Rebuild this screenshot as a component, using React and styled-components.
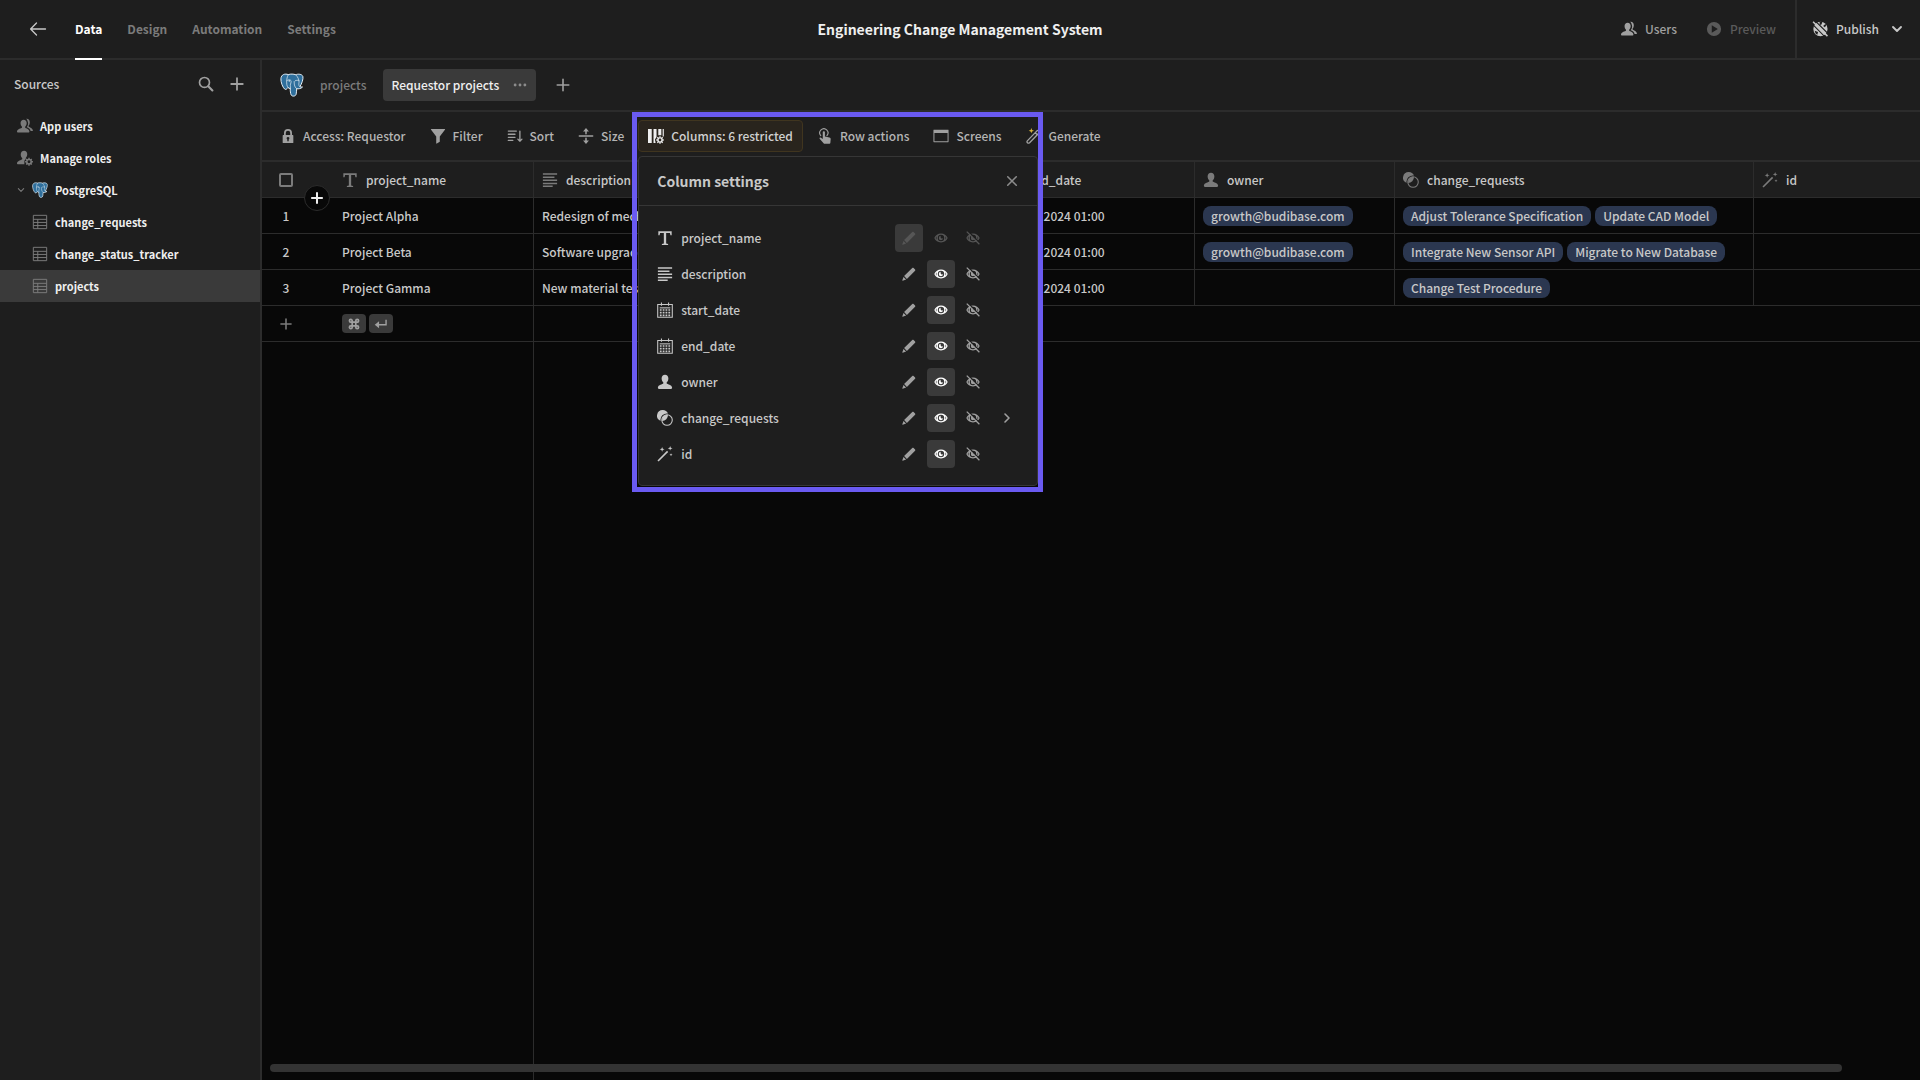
import React from "react";
import styled, { createGlobalStyle, css } from "styled-components";

const c = {
  panel: "#1e1e1e",
  grid: "#080808",
  line: "#2c2c2c",
  raised: "#3a3a3a",
  text: "#c8c8c8",
  bright: "#efefef",
  muted: "#7b7b7b",
  icon: "#a0a0a0",
  pill: "#2b3750",
  accent: "#6a5af1",
};

const Global = createGlobalStyle`
  *, *::before, *::after { box-sizing: border-box; }
  body {
    margin: 0;
    background: ${c.grid};
    color: ${c.text};
    font-family: "Noto Sans CJK SC", "Noto Sans", sans-serif;
    font-size: 12px;
    font-weight: 500;
    line-height: 20px;
  }
  button, input { font: inherit; color: inherit; margin: 0; }
`;

/* ---------- icons ---------- */

const Svg = styled.svg`
  display: block;
  flex: none;
  width: ${(p) => p.$size || 16}px;
  height: ${(p) => p.$size || 16}px;
  fill: currentColor;
`;
const Icon = ({ size, children }) => (
  <Svg $size={size} viewBox="0 0 18 18" aria-hidden="true">{children}</Svg>
);
const line = (w) => ({ fill: "none", stroke: "currentColor", strokeWidth: w, strokeLinecap: "round", strokeLinejoin: "round" });

const BackIcon = () => <Icon size={18}><path {...line(1.3)} d="M16.5 9H1.800M7.500 3L1.600 9l5.900 6" /></Icon>;
const SearchIcon = () => <Icon><circle cx="7.3" cy="7.3" r="5.600" {...line(1.900)} /><path {...line(2.400)} d="M11.800 11.800l4.400 4.400" /></Icon>;
const PlusIcon = ({ size, w = 2 }) => <Icon size={size}><path {...line(w)} d="M9 2.500v13M2.500 9h13" /></Icon>;
const CloseIcon = () => <Icon size={14}><path {...line(2)} d="M3.500 3.500l11 11M14.500 3.500l-11 11" /></Icon>;
const ChevronDown = ({ size, w = 2.4 }) => <Icon size={size}><path {...line(w)} d="M3 6l6 6 6-6" /></Icon>;
const ChevronRight = ({ size }) => <Icon size={size}><path {...line(2.400)} d="M6 3l6 6-6 6" /></Icon>;
const UserIcon = () => (
  <Icon><path d="M9 .8c2.300 0 3.800 1.700 3.800 4.200 0 1.700-.7 3.300-1.700 4.200-.4.400-.4 1.500.2 1.800 2.200 1 5.700 1.600 5.700 4.600 0 .8-.4 1.200-1.100 1.200H2.100c-.7 0-1.100-.4-1.100-1.200 0-3 3.500-3.600 5.700-4.600.6-.3.600-1.400.2-1.800-1-.9-1.700-2.500-1.700-4.200C5.200 2.500 6.700.8 9 .8z" /></Icon>
);
const UsersIcon = () => (
  <Icon>
    <path d="M7.500 2c2.100 0 3.400 1.500 3.400 3.700 0 1.600-.6 3-1.500 3.900-.4.400-.3 1.300.2 1.600 1.900.8 4.400 1.500 4.400 4.300 0 .600-.3.900-.8.900H.9c-.5 0-.9-.3-.9-.9 0-2.800 3.300-3.500 5.200-4.300.5-.3.600-1.200.2-1.600-.9-.9-1.400-2.300-1.400-3.900C4 3.500 5.400 2 7.500 2z" />
    <path d="M10.300.8c2.500-.4 4.100 1.300 4.100 3.900 0 1.700-.5 2.800-1.300 3.700-.3.400-.2 1.100.3 1.400 1.900.9 4.300 1.900 4.600 4.800h-2.700c-.5-2.300-2.400-3.300-4.300-4.100-.1-.3 0-.5.200-.7 1-1.100 1.400-2.600 1.300-4.300C12.100 3.500 11.500 1.900 10.300.8z" />
  </Icon>
);
const RolesIcon = () => (
  <Icon>
    <path d="M8 .8c2.200 0 3.500 1.500 3.500 3.900 0 1.600-.6 3-1.500 3.900-.3.400-.3 1 .1 1.300L8.300 12v4H.8c-.5 0-.8-.3-.8-.8 0-2.800 3.400-3.500 5.500-4.500.5-.3.600-1.300.200-1.700-1-.9-1.500-2.400-1.500-4C4.200 2.400 5.700.8 8 .8z" />
    <circle cx="13.500" cy="13.200" r="2.500" fill="none" stroke="currentColor" strokeWidth="1.700" />
    <path fill="none" stroke="currentColor" strokeWidth="1.600" d="M13.500 8.800v1.700M13.500 15.900v1.700M9.100 13.200h1.700M16.200 13.200h1.700M10.400 10.100l1.200 1.200M15.400 15.100l1.200 1.200M16.600 10.100l-1.200 1.200M11.600 15.100l-1.200 1.200" />
  </Icon>
);
const TableIcon = () => <Icon><path fill="none" stroke="currentColor" strokeWidth="1.100" d="M1.500 1.500h15v15h-15zM1.500 6h15M1.500 9.500h15M1.500 13h15M6.500 6v10.500" /></Icon>;
const LockIcon = () => <Icon><path fillRule="evenodd" d="M4.500 8V5.500a4.500 4.500 0 0 1 9 0V8h.9c.4 0 .6.2.6.6v7.800c0 .4-.2.6-.6.600H3.600c-.4 0-.6-.2-.6-.6V8.600c0-.4.2-.6.600-.6zm2 0h5V5.500a2.500 2.500 0 0 0-5 0zM9 10a1.500 1.500 0 0 0-.8 2.800V15h1.600v-2.200A1.500 1.500 0 0 0 9 10z" /></Icon>;
const FilterIcon = () => <Icon><path d="M1.700 1h14.600c.6 0 .9.600.500 1.100L11 9.500v6l-3.300 2c-.3.200-.7 0-.7-.4V9.500L1.200 2.100C.8 1.600 1.100 1 1.700 1z" /></Icon>;
const SortIcon = () => <Icon><path {...line(1.500)} d="M1.500 3.500h9M1.500 7h7.500M1.500 10.500h7.500M1.500 14h5M14.500 3.500v11M12.200 12.500l2.300 2.300 2.300-2.300" /></Icon>;
const SizeIcon = () => <Icon><path {...line(1.700)} d="M1.500 9h15M9 3v3.500M9 11.500V15" /><path d="M9 0l3.300 4H5.700zM9 18l-3.300-4h6.600z" /></Icon>;
const ColumnsIcon = () => (
  <Icon>
    <path d="M0 1h4.200v16H0zM6.200 1h3.400v9.200L7.800 13l.8 4H6.200zM11.600 1H15v7.200h-3.400zM16.500 1h1.300v8.500h-1.300z" />
    <circle cx="13.500" cy="13.500" r="2.300" fill="none" stroke="currentColor" strokeWidth="1.500" />
    <path fill="none" stroke="currentColor" strokeWidth="1.500" d="M13.500 9.300v1.800M13.500 15.900v1.800M9.300 13.500h1.800M15.900 13.500h1.800M10.500 10.500l1.200 1.200M15.300 15.300l1.200 1.200M16.500 10.500l-1.200 1.200M11.700 15.300l-1.200 1.200" />
  </Icon>
);
const TapIcon = () => (
  <Icon>
    <path d="M6.500 4.800c0-1.500 2.400-1.500 2.400 0v4.700l5 1.100c1 .2 1.500.8 1.500 1.800l-.4 4.500c-.1.600-.4.900-1 .9H8.600c-.5 0-.9-.2-1.200-.6L3 12.200c-.7-1 .5-2 1.500-1.300l2 1.500z" />
    <path {...line(1.300)} d="M4.200 8.500a4.600 4.600 0 1 1 7 0" />
  </Icon>
);
const ScreenIcon = () => <Icon><path fillRule="evenodd" d="M1 2h16c.3 0 .5.200.5.500v13c0 .3-.2.500-.5.500H1c-.3 0-.5-.2-.5-.5v-13c0-.3.2-.5.500-.5zm.6 3.500v9.300h14.800V5.500z" /></Icon>;
const GenerateIcon = () => (
  <Icon>
    <path fill="none" stroke="currentColor" strokeWidth="1.500" strokeLinejoin="round" d="M1.500 14.500L12.300 3.200c1.300-1.300 3.700 1 2.400 2.400L4 16.500c-1.700 1.400-3.800-.5-2.500-2z M10.500 5.300l2.200 2.200" />
    <path fill="#d9b43a" d="M6 0l.8 2.200L9 3l-2.200.8L6 6l-.8-2.200L3 3l2.200-.8z" />
    <circle cx="15.800" cy="11" r="1" fill="#d9b43a" />
  </Icon>
);
const TextIcon = () => <Icon><path d="M1.500 1.500h15v4.300h-1.400l-.5-2.300h-4.300v11.700l2.200.5v1.300h-7v-1.300l2.200-.5V3.500H3.400l-.5 2.300H1.500z" /></Icon>;
const LongTextIcon = () => <Icon><path d="M1 1.500h16v1.700H1zM1 5h13v1.700H1zM1 8.500h16v1.700H1zM1 12h16v1.700H1zM1 15.300h11V17H1z" /></Icon>;
const CalendarIcon = () => (
  <Icon>
    <path fill="none" stroke="currentColor" strokeWidth="1.200" d="M.8 2.800h16.400v14.400H.8zM5 .5v3.800M13 .5v3.800" />
    <path d="M3 6h12v1.200H3z" />
    <path fill="none" stroke="currentColor" strokeWidth="1.900" strokeDasharray="2 1.200" d="M3.200 9h12.200M3.200 12h12.200M3.200 15h12.200" />
  </Icon>
);
const LinkIcon = () => (
  <Icon>
    <path d="M6.500 0a6.500 6.500 0 0 1 5.900 3.900A7.400 7.400 0 0 0 4 12.500 6.500 6.500 0 0 1 6.500 0z" />
    <path d="M5.700 12.300a5.600 5.600 0 0 1 6.600-6.700 6.500 6.500 0 0 1-6.600 6.700z" />
    <circle cx="11.300" cy="11.300" r="5.900" fill="none" stroke="currentColor" strokeWidth="1.200" />
  </Icon>
);
const WandIcon = () => (
  <Icon>
    <path d="M.5 16.300L11.300 5.400l1.300 1.300L1.800 17.500zM5.800 1l.7 2 2 .7-2 .8-.7 2-.8-2-2-.8 2-.7zM14.800 0l.7 1.900 2 .7-2 .700-.7 1.900-.7-1.900-2-.7 2-.7zM15.800 8.200l.4 1.200 1.300.5-1.300.4-.4 1.300-.5-1.300-1.200-.4 1.200-.5z" />
  </Icon>
);
const PencilIcon = () => <Icon size={14}><path d="M13.200 1.200c.5-.5 1.200-.5 1.700 0l1.900 1.900c.5.500.5 1.200 0 1.700L6.300 15.300 2.700 11.700zM1.900 12.700l3.400 3.400-4.400 1.500c-.3.100-.6-.2-.5-.5z" /></Icon>;
const EyeShape = () => (
  <>
    <path fillRule="evenodd" d="M9 3.300c4 0 7 2.700 8.300 5.100.2.400.2.800 0 1.200C16 12 13 14.700 9 14.700S2 12 .7 9.600c-.2-.4-.2-.8 0-1.200C2 6 5 3.300 9 3.300zM9 4.900A4.100 4.100 0 1 0 9 13.100 4.100 4.100 0 0 0 9 4.900zM3.600 6.700C2.900 7.500 2.400 8.300 2.100 9c.3.700.8 1.500 1.500 2.300a6 6 0 0 1 0-4.600zm10.800 0a6 6 0 0 1 0 4.600c.7-.8 1.200-1.600 1.500-2.300-.3-.7-.8-1.500-1.500-2.300z" />
    <path d="M9 6.200a2.800 2.800 0 1 0 2.800 2.900A1.500 1.500 0 1 1 9 6.200z" />
  </>
);
const EyeIcon = () => <Icon size={14}><EyeShape /></Icon>;
const EyeOffIcon = () => (
  <Icon size={14}>
    <EyeShape />
    <path d="M2.500 0L18 15.500" stroke={c.panel} strokeWidth="1.600" />
    <path d="M1 .8L17.200 17" stroke="currentColor" strokeWidth="1.600" />
  </Icon>
);
const PlayIcon = () => <Icon><path fillRule="evenodd" d="M9 1a8 8 0 1 1 0 16A8 8 0 0 1 9 1zM6.500 4.800v8.400L13.300 9z" /></Icon>;
const GlobeOffIcon = () => (
  <Icon>
    <path d="M9.500 .8a8 8.200 0 1 1 0 16.400A8 8.200 0 0 1 9.500 .8z" />
    <path fill={c.panel} d="M8.500 .5l3.200.3-1 3-2 .8zM3 11l3.800 1.500-.8 3L4 14zM12.500 5.500l2.600-2 1 1-1.500 2.600z" />
    <path d="M.2 3.200L14.800 18M3.800 0L18 14.200" stroke={c.panel} strokeWidth="1.200" />
    <path d="M1.200 .8L17.400 17" stroke="currentColor" strokeWidth="1.700" />
  </Icon>
);
const CommandIcon = () => <Icon size={12}><path {...line(2.500)} d="M6.300 6.300h5.400v5.400H6.300zM6.300 6.300H4.200a2.100 2.100 0 1 1 2.100-2.100zM11.700 6.300V4.200a2.100 2.100 0 1 1 2.100 2.100zM11.700 11.700h2.100a2.100 2.100 0 1 1-2.100 2.100zM6.300 11.700v2.100a2.100 2.100 0 1 1-2.100-2.100z" /></Icon>;
const ReturnIcon = () => <Icon size={14}><path fill="none" stroke="currentColor" strokeWidth="1.800" d="M15.500 3.500v6.500H3.500" /><path d="M6.500 5.500v9L1 10z" /></Icon>;
const MoreIcon = () => <Icon><circle cx="3.500" cy="9" r="1.600" /><circle cx="9" cy="9" r="1.600" /><circle cx="14.500" cy="9" r="1.600" /></Icon>;

const PgSvg = styled.svg`
  display: block;
  flex: none;
  width: ${(p) => p.$size}px;
  height: ${(p) => p.$size}px;
`;
const PgMark = ({ size }) => (
  <PgSvg $size={size} viewBox="0 0 24 24" aria-hidden="true">
    <path
      fill="#2f6f9c" stroke="#e4eef5" strokeWidth="1" strokeLinejoin="round"
      d="M8.300 1.600C5 .4 1.200 1.300.9 5.800c-.2 3.300 1.800 8.700 3.800 10.300 1.200.9 2.300-.3 3.300-1.600.4.700 1.400 1 2.300 1-.2 2.200.1 4.800.9 6.500.7 1.600 4.600 1.700 5-1.100.3-1.900.4-3.600.5-5.200 1.500.4 4.600-.1 5.800-1.700-1 .1-2.100.1-2.600-.4 2-3 3.500-7.700 3-10-.8-2.700-4.900-2.800-7.200-1.900-2.200-.7-5-.9-7.400-.1z"
    />
    <path
      fill="none" stroke="#e4eef5" strokeWidth=".7" strokeLinecap="round"
      d="M8.300 1.700C6.600 4 6.500 8.500 6.800 11.500c.1 1.200.6 2.200 1.200 3M15.700 1.700c2.300 2.200 3.600 5.400 3.300 7.900-.2 1.600-.5 2.800.6 3.900M6.900 7.500c1.200-.9 3.600-1 4.100.2.500 1.500-.6 3-.7 4.500 0 1.200.4 2 .1 3.300M15.300 7.700c1.200-.6 2.600-.6 3.700-.1M14.200 8.500c.100 2.200-.3 5 2.500 7.200"
    />
    <circle cx="9.300" cy="7.900" r=".7" fill="#fff" />
  </PgSvg>
);

/* ---------- shell ---------- */

const Page = styled.div`
  display: flex;
  flex-direction: column;
  min-height: 100vh;
`;
const PlainButton = styled.button`
  display: flex;
  align-items: center;
  justify-content: center;
  border: 0;
  padding: 0;
  background: none;
  color: ${(p) => p.$color || c.icon};
  cursor: pointer;
`;
const TopBar = styled.header`
  display: grid;
  grid-template-columns: 1fr auto 1fr;
  align-items: stretch;
  height: 60px;
  background: ${c.panel};
  border-bottom: 2px solid ${c.line};
`;
const TopLeft = styled.div`
  display: flex;
  gap: 28px;
  padding-left: 29px;
`;
const Nav = styled.nav`
  display: flex;
  gap: 25px;
`;
const NavLink = styled.a`
  display: flex;
  align-items: center;
  margin-bottom: -2px;
  border-bottom: 2px solid ${(p) => (p.$active ? "#fff" : "transparent")};
  color: ${(p) => (p.$active ? "#fff" : c.muted)};
  font-weight: 600;
  text-decoration: none;
`;
const Title = styled.h1`
  margin: 0;
  align-self: center;
  color: ${c.bright};
  font-size: 14px;
  font-weight: 600;
`;
const TopRight = styled.div`
  display: flex;
  justify-content: flex-end;
`;
const TopAction = styled(PlainButton)`
  gap: 8px;
  margin-right: ${(p) => (p.$last ? 19 : 29)}px;
`;
const PublishArea = styled.div`
  display: flex;
  padding: 0 17px 0 15px;
  border-left: 2px solid ${c.line};
`;
const Publish = styled(PlainButton)`
  gap: 8px;
`;
const PublishLabel = styled.span`
  margin-right: 4px;
`;
const Body = styled.div`
  display: flex;
  flex: 1;
`;

/* ---------- sidebar ---------- */

const Sidebar = styled.aside`
  flex: none;
  width: 262px;
  background: ${c.panel};
  border-right: 2px solid ${c.line};
`;
const SideHead = styled.div`
  display: flex;
  align-items: center;
  gap: 15px;
  height: 50px;
  padding: 0 15px 2px 14px;
`;
const SideTitle = styled.h2`
  flex: 1;
  margin: 0;
  font-size: 12px;
  font-weight: 500;
`;
const SideItem = styled.a`
  display: flex;
  align-items: center;
  gap: 7px;
  height: 32px;
  padding-left: ${(p) => (p.$depth ? 32 : 17)}px;
  background: ${(p) => (p.$active ? c.raised : "transparent")};
  color: ${c.bright};
  font-size: 11px;
  font-weight: 600;
  text-decoration: none;
`;
const SideIcon = styled.span`
  display: flex;
  color: ${c.muted};
`;

/* ---------- main ---------- */

const Main = styled.main`
  display: flex;
  flex: 1;
  flex-direction: column;
  min-width: 0;
`;
const TabBar = styled.div`
  display: flex;
  align-items: center;
  height: 52px;
  padding-left: 18px;
  background: ${c.panel};
  border-bottom: 2px solid ${c.line};
`;
const SourceTab = styled.a`
  padding: 0 17px 0 16px;
  color: ${c.muted};
  text-decoration: none;
`;
const ViewTab = styled.div`
  display: flex;
  align-items: center;
  gap: 13px;
  height: 32px;
  margin-right: 19px;
  padding: 0 8px;
  border-radius: 4px;
  background: ${c.raised};
  color: ${c.bright};
`;
const Toolbar = styled.div`
  display: flex;
  align-items: center;
  gap: 4px;
  height: 50px;
  padding-left: 8px;
  background: ${c.panel};
  border-bottom: 2px solid ${c.line};
`;
const ToolWrap = styled.div`
  position: relative;
`;
const Tool = styled(PlainButton)`
  gap: 7px;
  height: 32px;
  padding: 0 9px;
  border: 1px solid transparent;
  border-radius: 4px;
  white-space: nowrap;
  ${(p) => p.$on && css`
    background: #29241d;
    border-color: #40351f;
    color: ${c.bright};
  `}
`;
const ToolLabel = styled.span`
  color: ${(p) => (p.$on ? "#d0d0d0" : "#b4b4b4")};
`;

/* ---------- column popover ---------- */

const Highlight = styled.div`
  position: absolute;
  z-index: 4;
  top: -8px;
  left: -6px;
  width: 411px;
  height: 380px;
  border: 5px solid ${c.accent};
  pointer-events: none;
`;
const Popover = styled.section`
  position: absolute;
  z-index: 3;
  top: 36px;
  left: 0;
  width: 400px;
  background: ${c.panel};
  border: 1px solid #363636;
  border-radius: 4px;
`;
const PopHead = styled.div`
  display: flex;
  align-items: center;
  justify-content: space-between;
  height: 49px;
  padding: 0 18px;
  border-bottom: 1px solid #363636;
`;
const PopTitle = styled.h2`
  margin: 0;
  font-size: 14px;
  font-weight: 600;
`;
const PopList = styled.ul`
  list-style: none;
  margin: 0;
  padding: 14px 18px 13px;
`;
const PopRow = styled.li`
  display: flex;
  align-items: center;
  gap: 8px;
  height: 36px;
`;
const PopName = styled.span`
  flex: 1;
`;
const Modes = styled.div`
  display: flex;
  gap: 4px;
`;
const Mode = styled(PlainButton)`
  width: 28px;
  height: 28px;
  border-radius: 4px;
  background: ${(p) => (p.$on ? c.raised : "none")};
  color: ${(p) => (p.disabled ? "#565656" : p.$on ? "#fff" : c.icon)};
`;
const RowEnd = styled.div`
  display: flex;
  justify-content: center;
  width: 24px;
`;

/* ---------- grid ---------- */

const GridArea = styled.div`
  position: relative;
  display: flex;
  flex: 1;
  flex-direction: column;
  background: ${c.grid};
`;
const Table = styled.table`
  width: 100%;
  table-layout: fixed;
  border-collapse: separate;
  border-spacing: 0;
`;
const Th = styled.th`
  height: 36px;
  padding: 0 8px;
  background: ${c.panel};
  border-bottom: 1px solid ${c.line};
  border-right: ${(p) => (p.$edge ? `1px solid ${c.line}` : 0)};
  font-weight: 500;
  text-align: left;
`;
const Td = styled.td`
  height: 36px;
  padding: 0 8px;
  border-bottom: 1px solid ${c.line};
  border-right: ${(p) => (p.$edge ? `1px solid ${c.line}` : 0)};
  overflow: hidden;
  white-space: nowrap;
`;
const HeadCell = styled.span`
  display: flex;
  align-items: center;
  gap: 8px;
`;
const HeadIcon = styled.span`
  display: flex;
  color: ${c.muted};
`;
const Gutter = styled.div`
  display: flex;
  justify-content: center;
  width: 32px;
`;
const Check = styled.input`
  appearance: none;
  width: 14px;
  height: 14px;
  border: 2px solid ${c.muted};
  border-radius: 2px;
`;
const Pills = styled.div`
  display: flex;
  gap: 4px;
`;
const Pill = styled.span`
  padding: 0 8px;
  border-radius: 8px;
  background: ${c.pill};
`;
const Keys = styled.div`
  display: flex;
  gap: 3px;
`;
const Key = styled.kbd`
  display: flex;
  align-items: center;
  justify-content: center;
  width: 24px;
  height: 19px;
  border-radius: 4px;
  background: ${c.raised};
  color: ${c.icon};
`;
const AddFloat = styled(PlainButton)`
  position: absolute;
  top: 23px;
  left: 42px;
  width: 26px;
  height: 26px;
  border: 1px solid ${c.line};
  border-radius: 50%;
  background: ${c.grid};
`;
const Rest = styled.div`
  display: flex;
  flex: 1;
  flex-direction: column;
  justify-content: flex-end;
  padding: 0 78px 8px 8px;
  background: linear-gradient(${c.line}, ${c.line}) 271px 0 / 1px 100% no-repeat;
`;
const Scroll = styled.div`
  height: 8px;
  border-radius: 4px;
  background: #333;
`;

/* ---------- data ---------- */

const columns = [
  { name: "project_name", icon: TextIcon, width: 200 },
  { name: "description", icon: LongTextIcon, width: 261 },
  { name: "start_date", icon: CalendarIcon, width: 200 },
  { name: "end_date", icon: CalendarIcon, width: 200 },
  { name: "owner", icon: UserIcon, width: 200 },
  { name: "change_requests", icon: LinkIcon, width: 359 },
  { name: "id", icon: WandIcon },
];
const rows = [
  ["Project Alpha", "Redesign of mech", "Jan 1 2024 01:00", "Jun 30 2024 01:00", "growth@budibase.com", ["Adjust Tolerance Specification", "Update CAD Model"]],
  ["Project Beta", "Software upgrade", "Feb 1 2024 01:00", "Jun 30 2024 01:00", "growth@budibase.com", ["Integrate New Sensor API", "Migrate to New Database"]],
  ["Project Gamma", "New material test", "Mar 1 2024 01:00", "Jun 30 2024 01:00", null, ["Change Test Procedure"]],
];
const tables = ["change_requests", "change_status_tracker", "projects"];

function ColumnSettings() {
  return (
    <Popover aria-label="Column settings">
      <PopHead>
        <PopTitle>Column settings</PopTitle>
        <PlainButton aria-label="Close" $color="#8c8c8c"><CloseIcon /></PlainButton>
      </PopHead>
      <PopList>
        {columns.map(({ name, icon: ColIcon }, i) => (
          <PopRow key={name}>
            <ColIcon />
            <PopName>{name}</PopName>
            <Modes>
              <Mode aria-label="Writable" disabled={i === 0} $on={i === 0}><PencilIcon /></Mode>
              <Mode aria-label="Read-only" disabled={i === 0} $on={i > 0}><EyeIcon /></Mode>
              <Mode aria-label="Hidden" disabled={i === 0}><EyeOffIcon /></Mode>
            </Modes>
            <RowEnd>
              {name === "change_requests" && <PlainButton aria-label="Expand"><ChevronRight size={12} /></PlainButton>}
            </RowEnd>
          </PopRow>
        ))}
      </PopList>
    </Popover>
  );
}

function ToolButton({ icon: ToolIcon, children, on }) {
  return <Tool $on={on}><ToolIcon /><ToolLabel $on={on}>{children}</ToolLabel></Tool>;
}

export default function App() {
  return (
    <Page>
      <Global />
      <TopBar>
        <TopLeft>
          <PlainButton aria-label="Back" $color={c.text}><BackIcon /></PlainButton>
          <Nav>
            <NavLink href="#data" $active>Data</NavLink>
            <NavLink href="#design">Design</NavLink>
            <NavLink href="#automation">Automation</NavLink>
            <NavLink href="#settings">Settings</NavLink>
          </Nav>
        </TopLeft>
        <Title>Engineering Change Management System</Title>
        <TopRight>
          <TopAction><UsersIcon />Users</TopAction>
          <TopAction disabled $last $color="#5a5a5a"><PlayIcon />Preview</TopAction>
          <PublishArea>
            <Publish $color={c.text}><GlobeOffIcon /><PublishLabel>Publish</PublishLabel><ChevronDown size={12} w={2.800} /></Publish>
          </PublishArea>
        </TopRight>
      </TopBar>
      <Body>
        <Sidebar>
          <SideHead>
            <SideTitle>Sources</SideTitle>
            <PlainButton aria-label="Search"><SearchIcon /></PlainButton>
            <PlainButton aria-label="Add source"><PlusIcon /></PlainButton>
          </SideHead>
          <SideItem href="#users"><SideIcon><UsersIcon /></SideIcon>App users</SideItem>
          <SideItem href="#roles"><SideIcon><RolesIcon /></SideIcon>Manage roles</SideItem>
          <SideItem href="#postgres"><SideIcon><ChevronDown size={8} /></SideIcon><PgMark size={16} />PostgreSQL</SideItem>
          {tables.map((t) => (
            <SideItem key={t} href={`#${t}`} $depth={1} $active={t === "projects"}>
              <SideIcon><TableIcon /></SideIcon>{t}
            </SideItem>
          ))}
        </Sidebar>
        <Main>
          <TabBar>
            <PgMark size={24} />
            <SourceTab href="#projects">projects</SourceTab>
            <ViewTab>Requestor projects<PlainButton aria-label="View options" $color="#8c8c8c"><MoreIcon /></PlainButton></ViewTab>
            <PlainButton aria-label="Add view"><PlusIcon w={1.800} /></PlainButton>
          </TabBar>
          <Toolbar>
            <ToolButton icon={LockIcon}>Access: Requestor</ToolButton>
            <ToolButton icon={FilterIcon}>Filter</ToolButton>
            <ToolButton icon={SortIcon}>Sort</ToolButton>
            <ToolButton icon={SizeIcon}>Size</ToolButton>
            <ToolWrap>
              <ToolButton icon={ColumnsIcon} on>Columns: 6 restricted</ToolButton>
              <ColumnSettings />
              <Highlight />
            </ToolWrap>
            <ToolButton icon={TapIcon}>Row actions</ToolButton>
            <ToolButton icon={ScreenIcon}>Screens</ToolButton>
            <ToolButton icon={GenerateIcon}>Generate</ToolButton>
          </Toolbar>
          <GridArea>
            <Table>
              <colgroup>
                <col style={{ width: 72 }} />
                {columns.map((col) => <col key={col.name} style={{ width: col.width }} />)}
              </colgroup>
              <thead>
                <tr>
                  <Th><Gutter><Check type="checkbox" aria-label="Select all rows" /></Gutter></Th>
                  {columns.map(({ name, icon: ColIcon }, i) => (
                    <Th key={name} $edge={i < 6}><HeadCell><HeadIcon><ColIcon /></HeadIcon>{name}</HeadCell></Th>
                  ))}
                </tr>
              </thead>
              <tbody>
                {rows.map(([name, desc, start, end, owner, requests], i) => (
                  <tr key={name}>
                    <Td><Gutter>{i + 1}</Gutter></Td>
                    <Td $edge>{name}</Td>
                    <Td $edge>{desc}</Td>
                    <Td $edge>{start}</Td>
                    <Td $edge>{end}</Td>
                    <Td $edge>{owner && <Pills><Pill>{owner}</Pill></Pills>}</Td>
                    <Td $edge><Pills>{requests.map((r) => <Pill key={r}>{r}</Pill>)}</Pills></Td>
                    <Td />
                  </tr>
                ))}
                <tr>
                  <Td><Gutter><PlainButton aria-label="Add row" $color={c.muted}><PlusIcon size={14} /></PlainButton></Gutter></Td>
                  <Td $edge><Keys><Key><CommandIcon /></Key><Key><ReturnIcon /></Key></Keys></Td>
                  <Td colSpan={6} />
                </tr>
              </tbody>
            </Table>
            <AddFloat aria-label="Insert row" $color={c.bright}><PlusIcon size={14} w={2.600} /></AddFloat>
            <Rest><Scroll /></Rest>
          </GridArea>
        </Main>
      </Body>
    </Page>
  );
}
